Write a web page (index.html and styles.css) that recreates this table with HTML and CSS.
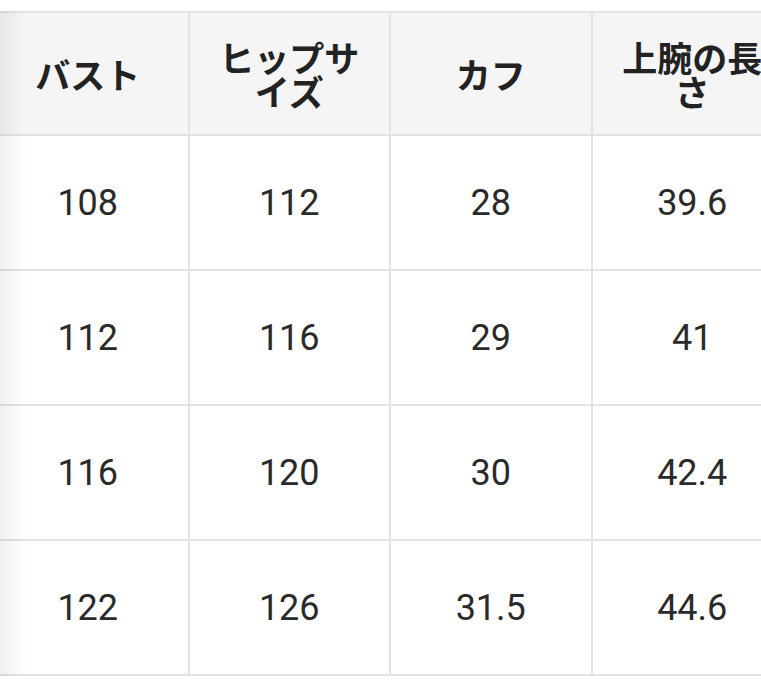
FILE: index.html
```html
<!DOCTYPE html>
<html lang="ja">
<head>
<meta charset="utf-8">
<link rel="stylesheet" href="styles.css">
</head>
<body>
<div class="scroller">
  <div class="shadow"></div>
  <table class="size-table">
    <thead>
      <tr>
        <th>バスト</th>
        <th>ヒップサイズ</th>
        <th>カフ</th>
        <th>上腕の長さ</th>
      </tr>
    </thead>
    <tbody>
      <tr><td>108</td><td>112</td><td>28</td><td>39.6</td></tr>
      <tr><td>112</td><td>116</td><td>29</td><td>41</td></tr>
      <tr><td>116</td><td>120</td><td>30</td><td>42.4</td></tr>
      <tr><td>122</td><td>126</td><td>31.5</td><td>44.6</td></tr>
    </tbody>
  </table>
</div>
</body>
</html>
```

FILE: styles.css
```css
html, body {
  margin: 0;
  padding: 0;
  background: #ffffff;
}

.scroller {
  position: relative;
  width: 761px;
  overflow: hidden;
  padding-top: 11px;
}

.shadow {
  position: absolute;
  left: 0;
  top: 11px;
  bottom: 0;
  width: 26px;
  background: linear-gradient(to right, rgba(0, 0, 0, 0.06), rgba(0, 0, 0, 0));
  z-index: 2;
  pointer-events: none;
}

.size-table {
  margin-left: -14px;
  border-collapse: collapse;
  table-layout: fixed;
  width: 808px;
  font-family: Roboto, "Noto Sans CJK JP", sans-serif;
}

.size-table th,
.size-table td {
  width: 200px;
  border: 2px solid #e3e3e3;
  text-align: center;
  vertical-align: middle;
  padding: 0 20px;
  box-sizing: border-box;
}

.size-table th {
  height: 123px;
  background: #f5f5f5;
  color: #222222;
  font-family: "Noto Sans CJK JP", sans-serif;
  font-weight: 700;
  font-size: 35px;
  line-height: 34px;
}

.size-table td {
  height: 135px;
  color: #2a2a2a;
  font-size: 36px;
  font-weight: 400;
}
```
